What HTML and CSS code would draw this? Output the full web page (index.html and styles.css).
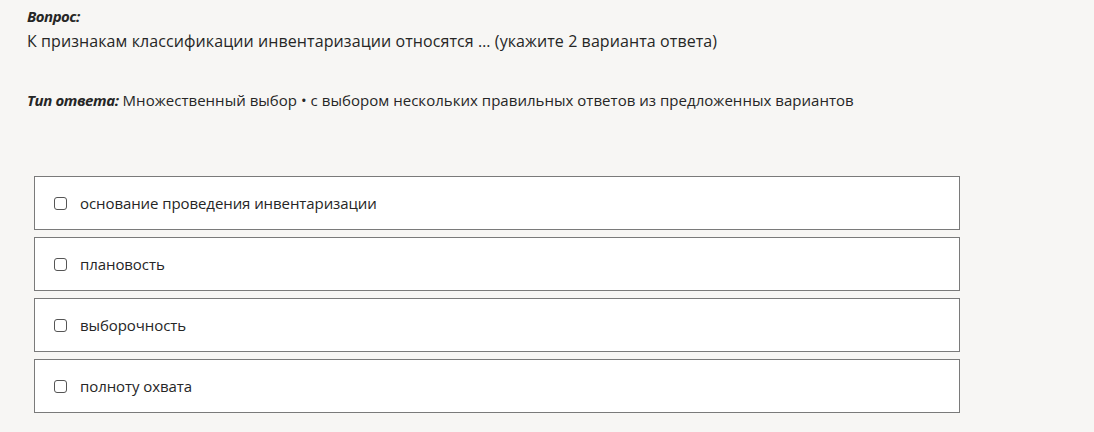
FILE: index.html
```html
<!DOCTYPE html>
<html lang="ru">
<head>
<meta charset="utf-8">
<link rel="stylesheet" href="styles.css">
</head>
<body>
<div class="page">
  <div class="label">Вопрос:</div>
  <div class="question">К признакам классификации инвентаризации относятся … (укажите 2 варианта ответа)</div>
  <div class="type"><span class="label-inline">Тип ответа:</span> Множественный выбор • с выбором нескольких правильных ответов из предложенных вариантов</div>
  <div class="options">
    <label class="option"><span class="box"></span><span class="text">основание проведения инвентаризации</span></label>
    <label class="option"><span class="box"></span><span class="text">плановость</span></label>
    <label class="option"><span class="box"></span><span class="text">выборочность</span></label>
    <label class="option"><span class="box"></span><span class="text">полноту охвата</span></label>
  </div>
</div>
</body>
</html>
```
FILE: styles.css
```css
html, body {
  margin: 0;
  padding: 0;
  background: #f7f6f4;
}
body {
  font-family: "Open Sans", "Noto Sans", sans-serif;
  color: #262626;
}
.page {
  padding: 6px 0 0 27px;
}
.label {
  font-weight: 700;
  font-style: italic;
  font-size: 15px;
  line-height: 20px;
  letter-spacing: -0.5px;
}
.question {
  font-size: 16px;
  line-height: 26px;
  margin-top: 2px;
  letter-spacing: 0.09px;
}
.type {
  font-size: 15px;
  line-height: 20px;
  margin-top: 36px;
  letter-spacing: 0.03px;
}
.label-inline {
  font-weight: 700;
  font-style: italic;
  letter-spacing: -0.4px;
}
.options {
  margin: 66px 0 0 7px;
  width: 926px;
  display: flex;
  flex-direction: column;
  gap: 7px;
}
.option {
  box-sizing: border-box;
  height: 54px;
  border: 1px solid #7a7a7a;
  background: #fff;
  display: flex;
  align-items: center;
  padding-left: 19px;
  font-size: 15px;
  letter-spacing: -0.08px;
}
.box {
  box-sizing: border-box;
  width: 13px;
  height: 13px;
  border: 1px solid #555;
  border-radius: 3px;
  margin-right: 13px;
  flex: none;
}
.text {
  line-height: 20px;
}
```
